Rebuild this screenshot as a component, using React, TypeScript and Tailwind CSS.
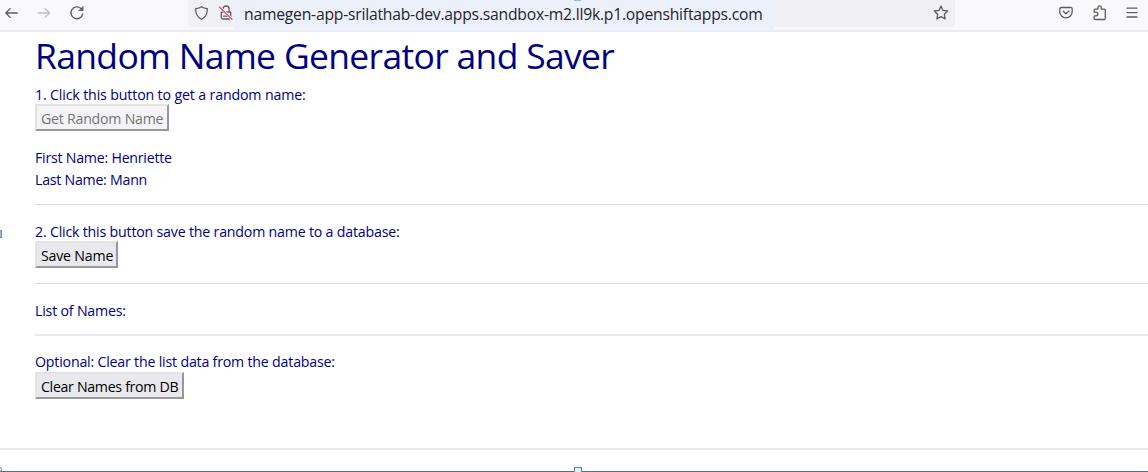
import type { ReactNode } from "react";

function Icon({ children, className }: { children: ReactNode; className: string }) {
  return (
    <svg viewBox="0 0 16 16" fill="none" stroke="currentColor" strokeWidth="1.3" strokeLinecap="round" strokeLinejoin="round" className={className}>
      {children}
    </svg>
  );
}

function Toolbar() {
  return (
    <header className="relative flex h-8 w-full shrink-0 border-b-2 border-[#ececf0] bg-[#f9f9fb] text-[#5b5b66]">
      <div className="flex w-[188px] shrink-0 items-start pt-[5px] pl-1">
        <Icon className="size-4">
          <path d="M13.2 8H1.8M6.2 3.6L1.8 8l4.4 4.4" />
        </Icon>
        <Icon className="ml-4 size-4 text-[#bdbdc4]">
          <path d="M2.2 8h11.4M9.2 3.6L13.6 8l-4.4 4.4" />
        </Icon>
        <Icon className="ml-[17px] size-4">
          <path d="M13.7 8.8A5.9 5.9 0 1 1 11.9 3.5L13.2 4.8" />
          <path d="M14.2 1.4v4.3H9.9z" fill="currentColor" strokeWidth=".5" />
        </Icon>
      </div>
      <div className="flex h-[27px] w-[767px] shrink-0 rounded-b bg-[#f0f0f4]">
        <div className="flex w-[46px] shrink-0 pt-[5px] pl-1.5">
          <Icon className="size-4">
            <path d="M8 1.3C9.8 2.6 11.6 3.1 14.2 3.4C14.5 8.7 12.2 12.5 8 14.7C3.8 12.5 1.5 8.7 1.8 3.4C4.4 3.1 6.2 2.6 8 1.3Z" />
          </Icon>
          <Icon className="-mt-px ml-[9px] h-[18px] w-[17px]">
            <path d="M4.8 7V4.2a3.2 3.2 0 0 1 6.4 0V7M3.3 7.2h9.4v5.2a1.6 1.6 0 0 1-1.6 1.6H4.9a1.6 1.6 0 0 1-1.6-1.6zM5.5 11.2h5" />
            <path d="M2 2.4L14 14.2" stroke="#f0f0f4" strokeWidth="2.6" />
            <path d="M1.4 2L14 14.2" stroke="#f0506f" />
          </Icon>
        </div>
        <div className="h-[31px] w-[541px] shrink-0 bg-[#ebf0fa] pl-[10px] text-[15.7px] leading-[28px] tracking-[-0.22px] whitespace-nowrap text-[#25252b]">
          namegen-app-srilathab-dev.apps.sandbox-m2.ll9k.p1.openshiftapps.com
        </div>
        <Icon className="mt-[5px] ml-[158px] size-4 shrink-0">
          <path d="M8 1.1l2 4.3 4.7.6-3.4 3.2.8 4.7L8 11.6l-4.1 2.3.8-4.7L1.3 6 6 5.4z" />
        </Icon>
      </div>
      <div className="flex items-start pt-[5px] pl-[103px]">
        <Icon className="size-4">
          <path d="M3.2 2.5h9.6a1.4 1.4 0 0 1 1.4 1.4v2.8a6.2 6.2 0 0 1-12.4 0V3.9a1.4 1.4 0 0 1 1.4-1.4zM5.2 6.2L8 8.8l2.8-2.6" />
        </Icon>
        <Icon className="ml-[18px] size-4">
          <path d="M2.2 7.2V5.2a1 1 0 0 1 1-1h2.7V2.6a1.7 1.7 0 0 1 3.4 0v1.6h3a1 1 0 0 1 1 1v8.3a1 1 0 0 1-1 1H3.2a1 1 0 0 1-1-1v-2.6h1.8a1.7 1.7 0 0 0 0-3.7z" />
        </Icon>
        <Icon className="ml-4 size-4">
          <path d="M3 3.2h10M3 7.6h10M3 12h10" />
        </Icon>
      </div>
      <span className="absolute top-0 left-[574px] h-px w-[7px] bg-[#9db9d8]" />
    </header>
  );
}

function Button({ children, disabled, className }: { children: ReactNode; disabled?: boolean; className: string }) {
  return (
    <button
      disabled={disabled}
      className={`block h-[27px] border-2 border-t-[#e3e3e3] border-r-[#989898] border-b-[#989898] border-l-[#e3e3e3] bg-[#e9e9ed] pl-[4px] text-left leading-[25px] whitespace-nowrap text-black disabled:bg-[#f4f4f6] disabled:text-[#747474] ${className}`}
    >
      {children}
    </button>
  );
}

export default function App() {
  return (
    <div className="relative flex h-[472px] w-full flex-col overflow-hidden bg-white font-['Open_Sans','Noto_Sans',sans-serif]">
      <Toolbar />
      <main className="pl-[35px] text-[14.2px] leading-[22px] whitespace-nowrap text-[#00007f]">
        <h1 className="h-[51px] text-[35.5px] leading-[46px] tracking-[-0.68px]">Random Name Generator and Saver</h1>
        <p className="h-[21px] leading-[24px] tracking-[-0.15px]">1. Click this button to get a random name:</p>
        <Button disabled className="w-[134px] tracking-[-0.25px]">Get Random Name</Button>
        <p className="mt-[16px] tracking-[-0.24px]">First Name: Henriette</p>
        <p className="tracking-[-0.26px]">Last Name: Mann</p>
        <hr className="mt-[13px] border-[#d9d9ee]" />
        <p className="mt-[15px] h-[21px] leading-[24px] tracking-[-0.2px]">2. Click this button save the random name to a database:</p>
        <Button className="w-[83px] tracking-[-0.21px]">Save Name</Button>
        <hr className="mt-[15px] border-[#d9d9e8]" />
        <p className="mt-[15px] leading-[23px] h-[22px] tracking-[-0.2px]">List of Names:</p>
        <hr className="mt-[13px] border-t-2 border-[#e8e8f1]" />
        <p className="mt-[15px] h-[21px] tracking-[-0.2px]">Optional: Clear the list data from the database:</p>
        <Button className="w-[149px] tracking-[-0.32px]">Clear Names from DB</Button>
      </main>
      <footer className="mt-auto h-6 shrink-0 border-t-2 border-b border-t-[#e7ebf0] border-b-[#4f6f94]" />
      <span className="absolute top-[230px] left-0 h-2 w-[2px] border border-l-0 border-[#6c91b5] bg-[#9dbad2]" />
      <span className="absolute bottom-0 left-[574px] h-[5px] w-2 border border-b-0 border-[#6888a8] bg-[#d8f5fa]" />
      <span className="absolute bottom-0 left-[-3px] h-[5px] w-[5px] rounded-full border border-[#71888f]" />
    </div>
  );
}
